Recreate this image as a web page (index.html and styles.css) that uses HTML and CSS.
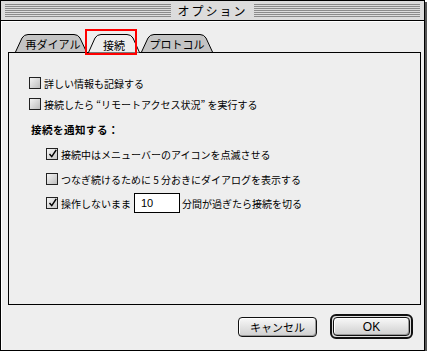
FILE: index.html
```html
<!DOCTYPE html>
<html lang="ja">
<head>
  <meta charset="UTF-8">
  <title>オプション</title>
  <link rel="stylesheet" href="styles.css">
</head>
<body>
  <div class="window">
    <div class="titlebar">
      <span class="title">オプション</span>
    </div>
    <div class="content">
      <div class="tabs">
        <div class="tab tab_1">
          <svg class="tab_shape" width="72" height="18" viewBox="0 0 72 18">
            <path d="M0.5 18 L7 4 Q9 0.5 13 0.5 L59 0.5 Q63 0.5 65 4 L71.5 18" fill="#c4c4c4" stroke="#000"/>
          </svg>
          <span>再ダイアル</span>
        </div>
        <div class="tab tab_2 active">
          <svg class="tab_shape" width="52" height="19" viewBox="0 0 52 19">
            <path d="M0.5 18.5 L7 4 Q9 0.5 13 0.5 L39 0.5 Q43 0.5 45 4 L51.5 18.5" fill="#eeeeee" stroke="#000"/>
          </svg>
          <span>接続</span>
        </div>
        <div class="tab tab_3">
          <svg class="tab_shape" width="72" height="18" viewBox="0 0 72 18">
            <path d="M0.5 18 L7 4 Q9 0.5 13 0.5 L59 0.5 Q63 0.5 65 4 L71.5 18" fill="#c4c4c4" stroke="#000"/>
          </svg>
          <span>プロトコル</span>
        </div>
        <div class="highlight"></div>
      </div>
      <div class="panel">
        <div class="row">
          <span class="check"></span>
          <span>詳しい情報も記録する</span>
        </div>
        <div class="row row_2">
          <span class="check"></span>
          <span>接続したら “リモートアクセス状況” を実行する</span>
        </div>
        <div class="heading">接続を通知する：</div>
        <div class="row sub">
          <span class="check checked">
            <svg width="12" height="12" viewBox="0 0 12 12"><path d="M2 6 L5 9.5 L11 0.5" fill="none" stroke="#000" stroke-width="2"/></svg>
          </span>
          <span>接続中はメニューバーのアイコンを点滅させる</span>
        </div>
        <div class="row sub">
          <span class="check"></span>
          <span>つなぎ続けるために 5 分おきにダイアログを表示する</span>
        </div>
        <div class="row sub">
          <span class="check checked">
            <svg width="12" height="12" viewBox="0 0 12 12"><path d="M2 6 L5 9.5 L11 0.5" fill="none" stroke="#000" stroke-width="2"/></svg>
          </span>
          <span>操作しないまま</span>
          <span class="field">10</span>
          <span class="after">分間が過ぎたら接続を切る</span>
        </div>
      </div>
      <div class="buttons">
        <button type="button" class="btn">キャンセル</button>
        <div class="default_ring">
          <button type="button" class="btn btn_ok">OK</button>
        </div>
      </div>
    </div>
  </div>
</body>
</html>
```

FILE: styles.css
```css
body {
  margin: 0;
  background-color: #ffffff;
  font-family: "Noto Sans CJK JP", "Noto Sans", sans-serif;
  font-size: 10px;
  color: #000;
}
.window {
  width: 425px;
  height: 351px;
  border: 1px solid #000;
  background-color: #eeeeee;
  box-shadow: 2px 2px 0 #555;
  box-sizing: border-box;
  display: flex;
  flex-direction: column;
}
.titlebar {
  height: 20px;
  border-bottom: 1px solid #000;
  box-sizing: border-box;
  background-color: #dcdcdc;
  background-image: repeating-linear-gradient(to bottom, #dcdcdc 0px, #dcdcdc 1px, #8a8a8a 1px, #8a8a8a 2px);
  background-size: calc(100% - 8px) 14px;
  background-position: 4px 2px;
  background-repeat: no-repeat;
  display: flex;
  justify-content: center;
  align-items: center;
}
.title {
  background-color: #dcdcdc;
  padding: 0 6px;
  font-size: 12px;
  letter-spacing: 2px;
  line-height: 18px;
}
.content {
  flex: 1;
  padding: 12px 2px 0 6px;
  display: flex;
  flex-direction: column;
  border-left: 1px solid #fff;
  border-top: 1px solid #fff;
}
.tabs {
  display: flex;
  height: 18px;
  padding-left: 7px;
  position: relative;
}
.tab {
  position: relative;
  height: 18px;
  display: flex;
  justify-content: center;
  align-items: flex-end;
  padding-bottom: 1px;
  box-sizing: border-box;
}
.tab span {
  position: relative;
  font-size: 11px;
  line-height: 14px;
}
.tab_shape {
  position: absolute;
  left: 0;
  top: 0;
}
.tab_1 {
  width: 72px;
}
.tab_1 span {
  margin-left: 4px;
}
.tab_2 {
  width: 52px;
  height: 19px;
  margin-left: 1px;
  margin-bottom: -1px;
  z-index: 2;
}
.tab_3 {
  width: 72px;
  margin-left: 1px;
}
.highlight {
  position: absolute;
  left: 77px;
  top: -5px;
  width: 48px;
  height: 22px;
  border: 2px solid #ff0000;
  z-index: 3;
}
.panel {
  height: 253px;
  border: 1px solid #000;
  box-sizing: border-box;
  margin-right: 1px;
  padding: 22px 0 0 20px;
  display: flex;
  flex-direction: column;
}
.row {
  display: flex;
  align-items: center;
  height: 16px;
  gap: 3px;
}
.row_2 {
  margin-top: 5px;
}
.heading {
  font-weight: bold;
  font-size: 10.5px;
  letter-spacing: 0.5px;
  margin-top: 10px;
  margin-left: 2px;
  height: 16px;
  line-height: 16px;
}
.sub {
  margin-left: 17px;
  margin-top: 8px;
}
.sub:nth-of-type(5) {
  margin-top: 9px;
}
.check {
  width: 12px;
  height: 12px;
  border: 1px solid #222;
  box-sizing: border-box;
  background: linear-gradient(135deg, #f4f4f4, #bdbdbd);
  display: flex;
  align-items: center;
  justify-content: center;
}
.check.checked {
  background: linear-gradient(135deg, #f4f4f4, #c8c8c8);
}
.check svg {
  margin-top: -1px;
  margin-left: 1px;
}
.field {
  width: 46px;
  height: 20px;
  border: 1px solid #000;
  box-sizing: border-box;
  background-color: #fff;
  padding-left: 6px;
  font-family: "Liberation Sans", sans-serif;
  font-size: 11px;
  line-height: 18px;
  margin-left: 0;
}
.after {
  margin-left: -1px;
}
.buttons {
  display: flex;
  justify-content: flex-end;
  align-items: center;
  margin-top: 9px;
  padding-right: 9px;
  gap: 13px;
}
.btn {
  height: 20px;
  border: 1px solid #111;
  border-radius: 4px;
  background: linear-gradient(to bottom, #f8f8f8, #cfcfcf);
  box-shadow: inset -1px -1px 0 #999, inset 1px 1px 0 #fff;
  font-family: "Noto Sans CJK JP", sans-serif;
  font-size: 11px;
  padding: 0;
  width: 79px;
}
.default_ring {
  border: 2px solid #111;
  border-radius: 6px;
  padding: 1px;
  background-color: #dedede;
}
.btn_ok {
  width: 77px;
  height: 19px;
  font-family: "Liberation Sans", sans-serif;
  font-size: 12px;
}
```
